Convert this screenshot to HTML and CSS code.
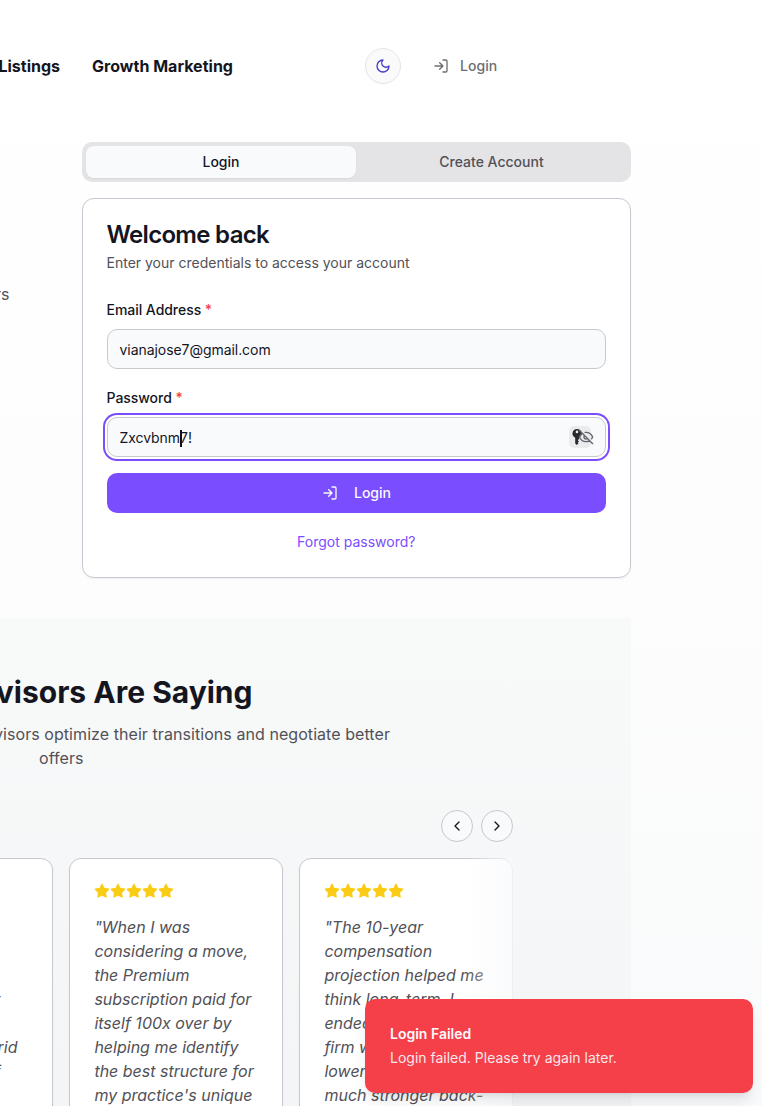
FILE: index.html
```html
<!DOCTYPE html>
<html lang="en">
<head>
<meta charset="utf-8">
<title>Login</title>
<link rel="stylesheet" href="styles.css">
</head>
<body>
<svg class="defs" width="0" height="0">
  <symbol id="login" viewBox="0 0 24 24"><path d="M15 3h4a2 2 0 0 1 2 2v14a2 2 0 0 1-2 2h-4M10 17l5-5-5-5M15 12H3"/></symbol>
  <symbol id="star" viewBox="0 0 24 24"><path d="M12 2l3.09 6.26L22 9.27l-5 4.87 1.18 6.88L12 17.77l-6.18 3.25L7 14.14 2 9.27l6.91-1.01L12 2z"/></symbol>
</svg>
<header class="header">
  <nav class="nav"><a>Listings</a><a>Growth Marketing</a></nav>
  <button class="theme"><svg class="icon" viewBox="0 0 24 24"><path d="M12 3a6 6 0 0 0 9 9 9 9 0 1 1-9-9Z"/></svg></button>
  <a class="head-login"><svg class="icon"><use href="#login"/></svg>Login</a>
</header>
<main class="main">
  <div class="hero">
    <p class="hero-copy">rs</p>
    <div class="auth">
      <div class="tabs"><button class="tab active">Login</button><button class="tab">Create Account</button></div>
      <section class="card">
        <h2>Welcome back</h2>
        <p class="sub">Enter your credentials to access your account</p>
        <label class="label">Email Address <span>*</span></label>
        <div class="input">vianajose7@gmail.com</div>
        <label class="label second">Password <span>*</span></label>
        <div class="input focus">Zxcvbnm<i class="caret"></i>7!
          <span class="reveal">
            <svg class="key" viewBox="0 0 10 16"><path fill-rule="evenodd" d="M5 0a4.6 4.6 0 0 1 2 8.700V10L5.800 11.200 7 12.400 5.800 13.600 6.500 14.300 4.900 16 3.200 14.400V8.800A4.600 4.600 0 0 1 5 0ZM5 1.600a1.300 1.300 0 1 0 0 2.600 1.300 1.300 0 0 0 0-2.600Z"/></svg>
            <svg class="icon eye" viewBox="0 0 24 24"><path d="M9.880 9.880a3 3 0 1 0 4.240 4.240M10.730 5.080A10.430 10.430 0 0 1 12 5c7 0 10 7 10 7a13.160 13.160 0 0 1-1.670 2.680M6.610 6.610A13.526 13.526 0 0 0 2 12s3 7 10 7a9.740 9.740 0 0 0 5.390-1.610M2 2l20 20"/></svg>
          </span>
        </div>
        <button class="submit"><svg class="icon"><use href="#login"/></svg>Login</button>
        <a class="forgot">Forgot password?</a>
      </section>
    </div>
  </div>
  <section class="quotes">
    <h2 class="quotes-title">visors Are Saying</h2>
    <p class="quotes-sub">visors optimize their transitions and negotiate better</p>
    <p class="quotes-sub last">offers</p>
    <div class="arrows">
      <button><svg class="icon" viewBox="0 0 24 24"><path d="m15 18-6-6 6-6"/></svg></button>
      <button><svg class="icon" viewBox="0 0 24 24"><path d="m9 18 6-6-6-6"/></svg></button>
    </div>
    <div class="track">
      <article class="quote cut"><p><br><br><br><span class="far">t</span><br><br>rid<br><span class="far">f</span></p></article>
      <article class="quote">
        <div class="stars"><svg><use href="#star"/></svg><svg><use href="#star"/></svg><svg><use href="#star"/></svg><svg><use href="#star"/></svg><svg><use href="#star"/></svg></div>
        <p>"When I was<br>considering a move,<br>the Premium<br>subscription paid for<br>itself 100x over by<br>helping me identify<br>the best structure for<br>my practice's unique</p>
      </article>
      <article class="quote">
        <div class="stars"><svg><use href="#star"/></svg><svg><use href="#star"/></svg><svg><use href="#star"/></svg><svg><use href="#star"/></svg><svg><use href="#star"/></svg></div>
        <p>"The 10-year<br>compensation<br>projection helped me<br>think long-term. I<br>ended<br>firm w<br>lower<br>much stronger back-</p>
      </article>
      <div class="fade"></div>
    </div>
  </section>
</main>
<div class="toast"><strong>Login Failed</strong><span>Login failed. Please try again later.</span></div>
</body>
</html>
```
FILE: styles.css
```css
* { box-sizing: border-box; margin: 0; }
body { position: relative; width: 762px; height: 1106px; overflow: hidden; font: 14px/20px Inter, sans-serif; color: #14151f; background: linear-gradient(180deg, #fff 0, #fdfdfd 50%, #f9fafb 100%); }
.defs { position: absolute; }
button { font: inherit; letter-spacing: inherit; color: inherit; border: 0; padding: 0; background: none; }
.icon { width: 16px; height: 16px; fill: none; stroke: currentColor; stroke-width: 2; stroke-linecap: round; stroke-linejoin: round; flex: none; }
.header { display: flex; align-items: center; height: 132px; }
.nav { display: flex; justify-content: flex-end; gap: 32px; width: 233px; font-size: 16px; font-weight: 700; letter-spacing: .001em; white-space: nowrap; }
.theme { display: grid; place-items: center; width: 36px; height: 36px; margin-left: 132px; border: 1px solid #e5e5e9; border-radius: 50%; background: #fafafb; color: #4338ca; }
.head-login { display: flex; align-items: center; gap: 11px; margin-left: 32px; font-weight: 500; letter-spacing: .005em; color: #6d6d72; }
.hero { display: flex; height: 486px; padding-top: 10px; }
.hero-copy { width: 82px; padding: 140px 72.500px 0 0; display: flex; justify-content: flex-end; font-size: 16px; line-height: 24px; color: #515157; }
.auth { width: 549px; }
.tabs { display: flex; height: 40px; padding: 4px; border-radius: 10px; background: #e4e4e6; }
.tab { flex: 1; border-radius: 8px; font-weight: 500; color: #515157; }
.active { flex: 0 0 270px; background: #f9fafc; color: #14151f; box-shadow: 0 1px 2px #0000000d; }
.card { height: 380px; margin-top: 16px; padding: 20px 24px 20px 23.500px; border: 1px solid #c9c8d1; border-radius: 12px; background: #fff; box-shadow: 0 1px 2px #0000000d; }
.card h2 { font-size: 24px; line-height: 32px; font-weight: 600; letter-spacing: -.029em; }
.sub { margin-top: 2px; color: #515157; }
.label { display: block; margin-top: 27px; font-weight: 500; letter-spacing: -.003em; }
.label.second { margin-top: 19px; }
.label span { color: #f43f48; }
.input { position: relative; display: flex; align-items: center; width: 499px; height: 40px; margin: 9px 0 0 .5px; padding: 2px 12px 0 11.500px; border: 1px solid #c9c9cd; border-radius: 10px; background: #f9fafc; letter-spacing: -.004em; }
.focus { box-shadow: 0 0 0 2px #fff, 0 0 0 4px #7a4dff; }
.caret { width: 2px; height: 17px; margin: 0 -2px 0 0; background: #111; }
.reveal { position: absolute; right: 14px; top: 8px; width: 22px; height: 22px; border-radius: 5px; background: #eaebed; color: #62646e; }
.key { position: absolute; left: 3px; top: 3px; width: 10px; height: 16px; fill: #29292b; }
.eye { position: absolute; left: 9px; top: 3px; }
.submit { display: flex; align-items: center; justify-content: center; gap: 16px; width: 499px; height: 40px; margin: 16px 0 0 .5px; border-radius: 10px; background: #7a4dff; color: #f9fafc; font-weight: 500; }
.forgot { display: block; margin-top: 19px; text-align: center; color: #7a4dff; }
.quotes { width: 631px; height: 488px; padding-top: 54px; background: linear-gradient(180deg, #f8f9f9, #f4f5f6); }
.quotes-title { display: flex; justify-content: flex-end; width: 252.500px; font-size: 30px; line-height: 40px; font-weight: 700; white-space: nowrap; }
.quotes-sub { display: flex; justify-content: flex-end; width: 390px; margin-top: 10px; font-size: 16px; line-height: 24px; letter-spacing: .004em; color: #515157; white-space: nowrap; }
.quotes-sub.last { width: 83.500px; margin-top: 0; }
.arrows { display: flex; justify-content: flex-end; gap: 8px; width: 513px; margin-top: 40px; }
.arrows button { display: grid; place-items: center; width: 32px; height: 32px; border: 1px solid #c9c8d1; border-radius: 50%; background: #f9fafc; }
.track { position: relative; display: flex; gap: 16px; width: 513px; height: 248px; margin-top: 16px; overflow: hidden; }
.quote { flex: none; width: 214px; height: 290px; padding: 24px; border: 1px solid #c9c8d1; border-radius: 12px; background: #fff; box-shadow: 0 1px 2px #0000000d; }
.cut { margin-left: -161px; padding: 56px 34.500px 0 0; text-align: right; }
.far { margin-right: 17px; }
.stars { display: flex; width: 80px; height: 16px; }
.stars svg { width: 16px; height: 16px; fill: #facc15; stroke: #facc15; stroke-width: 2; stroke-linejoin: round; }
.quote p { font-size: 16px; line-height: 24px; font-style: italic; color: #515157; white-space: nowrap; }
.stars + p { margin: 16px 0 0 .4px; }
.fade { position: absolute; right: 0; top: 0; width: 48px; height: 100%; background: linear-gradient(90deg, #f9fafc00, #f9fafccc); }
.toast { position: absolute; left: 365px; top: 999px; display: flex; flex-direction: column; gap: 4px; width: 388px; height: 94px; padding: 25px; border-radius: 10px; background: #f53f49; color: #f9fafc; box-shadow: 0 10px 15px -3px #0000001a, 0 4px 6px -4px #0000001a; }
.toast strong { font-weight: 600; }
.toast span { opacity: .9; }
```
